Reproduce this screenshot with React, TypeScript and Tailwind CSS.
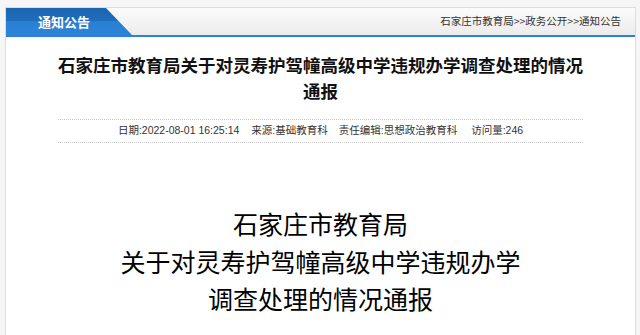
const cjk = "font-['Microsoft_YaHei','Noto_Sans_CJK_SC',sans-serif]";

const Header = () => (
  <div className="relative flex h-[29px] items-stretch justify-between border-b-2 border-[#2b82d6] bg-gradient-to-b from-[#fbfbfb] to-[#ececec]">
    <div className="relative w-[126px]">
      <svg className="absolute inset-0" width="126" height="27" viewBox="0 0 126 27">
        <defs>
          <linearGradient id="tab" x1="0" y1="0" x2="0" y2="1">
            <stop offset="0" stopColor="#1c66b0" />
            <stop offset="0.5" stopColor="#1f6ebd" />
            <stop offset="0.5" stopColor="#2a7fd2" />
            <stop offset="1" stopColor="#2d84d8" />
          </linearGradient>
        </defs>
        <polygon points="0,0 100,0 126,27 0,27" fill="url(#tab)" />
      </svg>
      <span className="absolute left-[32px] top-[5px] text-[13px] font-bold leading-[17px] text-white">通知公告</span>
    </div>
    <div className="flex items-center pr-[14px] pb-[2px] text-[10.5px] text-[#333]">
      石家庄市教育局&gt;&gt;政务公开&gt;&gt;通知公告
    </div>
  </div>
);

const Meta = () => (
  <div className="mx-[52px] mt-[15px] flex h-[24px] items-center justify-center border-y border-dotted border-[#c8c8c8] text-[10.5px] text-[#333] font-['Liberation_Sans','Noto_Sans_CJK_SC',sans-serif]">
    <span>日期:2022-08-01 16:25:14</span>
    <span className="ml-[12px]">来源:基础教育科</span>
    <span className="ml-[11px]">责任编辑:思想政治教育科</span>
    <span className="ml-[14px]">访问量:246</span>
  </div>
);

export default function App() {
  return (
    <div className={`min-h-[335px] bg-[#f6f6f6] pl-[5px] pr-[4px] pt-[7px] ${cjk}`}>
      <div className="h-[328px] overflow-hidden border border-b-0 border-[#dcdcdc] bg-white">
        <Header />
        <h1 className="mt-[15px] text-center text-[17.5px] font-bold leading-[26px] text-[#111]">
          石家庄市教育局关于对灵寿护驾幢高级中学违规办学调查处理的情况
          <br />
          通报
        </h1>
        <Meta />
        <div className="mt-[62px] text-center text-[25px] leading-[37.5px] text-black">
          <p>石家庄市教育局</p>
          <p>关于对灵寿护驾幢高级中学违规办学</p>
          <p>调查处理的情况通报</p>
        </div>
      </div>
    </div>
  );
}
